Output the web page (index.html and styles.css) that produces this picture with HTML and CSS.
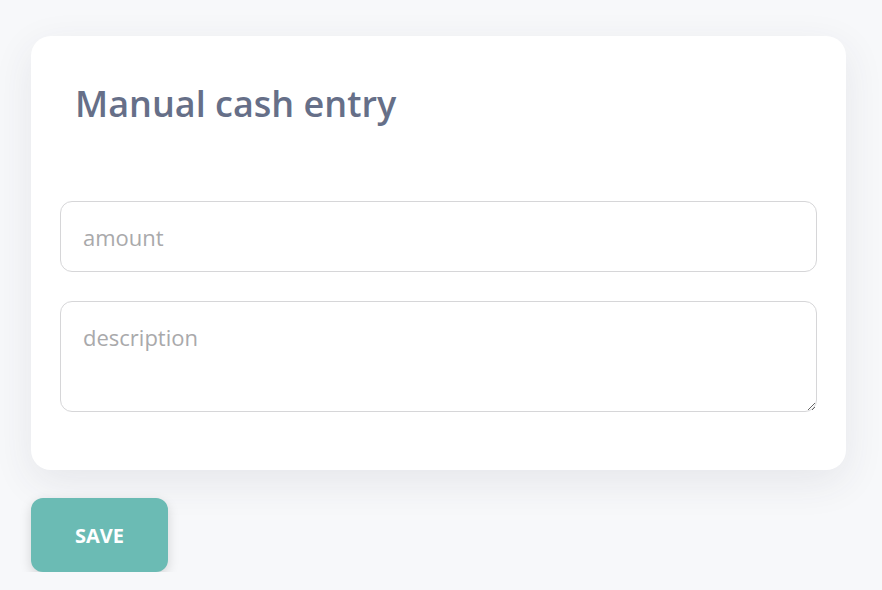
FILE: index.html
```html
<!DOCTYPE html>
<html>
<head>
<meta charset="utf-8">
<link rel="stylesheet" href="styles.css">
</head>
<body>
<div class="page">
  <div class="card">
    <h2 class="title">Manual cash entry</h2>
    <form class="form">
      <input class="field" type="text" placeholder="amount">
      <textarea class="field area" placeholder="description"></textarea>
    </form>
  </div>
  <button class="save" type="button">SAVE</button>
</div>
</body>
</html>
```
FILE: styles.css
```css
html, body {
  margin: 0;
  padding: 0;
  background: #f7f8fa;
  font-family: "Open Sans", "Liberation Sans", sans-serif;
}
.page {
  padding: 36px 36px 0 31px;
  display: flex;
  flex-direction: column;
  align-items: flex-start;
  gap: 28px;
}
.card {
  box-sizing: border-box;
  width: 815px;
  height: 434px;
  background: #ffffff;
  border-radius: 20px;
  box-shadow: 0 12px 40px rgba(50, 60, 80, 0.09);
  padding: 44px 29px 0 29px;
}
.title {
  margin: 0 0 0 15px;
  font-size: 36px;
  line-height: 48px;
  font-weight: 600;
  color: #666f88;
}
.form {
  margin-top: 73px;
  display: flex;
  flex-direction: column;
  gap: 29px;
}
.field {
  box-sizing: border-box;
  width: 757px;
  height: 71px;
  border: 1px solid #d6d6d8;
  border-radius: 12px;
  padding: 0 22px;
  font-family: "Open Sans", "Liberation Sans", sans-serif;
  font-size: 22px;
  color: #333;
  background: #fff;
  outline: none;
}
.field::placeholder {
  color: #a9a9ab;
}
.area {
  height: 111px;
  padding: 20px 22px;
  resize: vertical;
  display: block;
}
.save {
  width: 137px;
  height: 74px;
  border: none;
  border-radius: 12px;
  background: #6bbbb4;
  color: #fff;
  font-family: "Open Sans", "Liberation Sans", sans-serif;
  font-weight: 700;
  font-size: 20px;
  box-shadow: 0 4px 12px rgba(0, 0, 0, 0.15);
}
```
